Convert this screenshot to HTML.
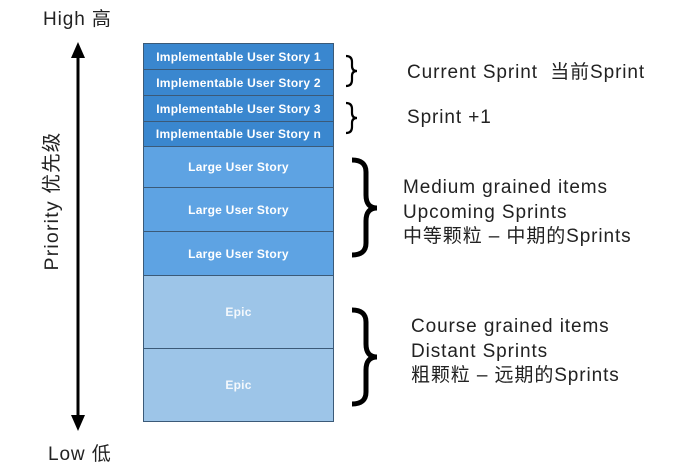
<!DOCTYPE html>
<html><head><meta charset="utf-8"><style>
body{margin:0;width:674px;height:473px;background:#fff;position:relative;overflow:hidden;font-family:"Liberation Sans","Noto Sans CJK SC",sans-serif;color:#222}
.r{position:absolute;left:143px;width:191px;border:1px solid #3b5a78;border-bottom:none;color:#fff;font-weight:bold;display:flex;align-items:center;justify-content:center;box-sizing:border-box;letter-spacing:0.25px}
.a{background:#3a87cf;font-size:12px}
.b{background:#5ea3e3;font-size:12px}
.c{background:#9dc5e8;font-size:12px;color:#f4f8fc}
.t{position:absolute;font-size:19px;line-height:24.5px;white-space:nowrap;letter-spacing:0.9px}
</style></head><body>
<div class="t" style="left:43px;top:8px">High 高</div>
<div class="t" style="left:48px;top:443px">Low 低</div>
<svg style="position:absolute;left:0;top:0" width="674" height="473">
<line x1="78" y1="55" x2="78" y2="420" stroke="#000" stroke-width="3"/>
<polygon points="78,42 71,58 85,58" fill="#000"/>
<polygon points="78,431 71,415 85,415" fill="#000"/>
<g fill="none" stroke="#000" stroke-width="2.2">
<path d="M346,56 Q352,56 352,62 L352,66 Q352,71 357,71 Q352,71 352,76 L352,80 Q352,86 346,86"/>
<path d="M346,103 Q352,103 352,109 L352,113 Q352,118 357,118 Q352,118 352,123 L352,127 Q352,133 346,133"/>
</g>
<g fill="none" stroke="#000" stroke-width="5">
<path d="M352,160 Q366,160 366,172 L366,195 Q366,208 377,208 Q366,208 366,221 L366,243 Q366,255 352,255"/>
<path d="M352,310 Q366,310 366,322 L366,344 Q366,357 377,357 Q366,357 366,370 L366,392 Q366,404 352,404"/>
</g>
</svg>
<div class="t" style="left:52px;top:201px;transform:translate(-50%,-50%) rotate(-90deg);font-size:19.5px;letter-spacing:1.2px">Priority 优先级</div>
<div class="r a" style="top:43px;height:26px">Implementable User Story 1</div>
<div class="r a" style="top:69px;height:26px">Implementable User Story 2</div>
<div class="r a" style="top:95px;height:26px">Implementable User Story 3</div>
<div class="r a" style="top:121px;height:25px">Implementable User Story n</div>
<div class="r b" style="top:146px;height:41px">Large User Story</div>
<div class="r b" style="top:187px;height:44px">Large User Story</div>
<div class="r b" style="top:231px;height:44px">Large User Story</div>
<div class="r c" style="top:275px;height:73px">Epic</div>
<div class="r c" style="top:348px;height:74px;border-bottom:1px solid #3b5a78">Epic</div>
<div class="t" style="left:407px;top:61px">Current Sprint&nbsp; 当前Sprint</div>
<div class="t" style="left:407px;top:106px">Sprint +1</div>
<div class="t" style="left:403px;top:176px">Medium grained items<br>Upcoming Sprints<br>中等颗粒 – 中期的Sprints</div>
<div class="t" style="left:411px;top:315px">Course grained items<br>Distant Sprints<br>粗颗粒 – 远期的Sprints</div>
</body></html>
